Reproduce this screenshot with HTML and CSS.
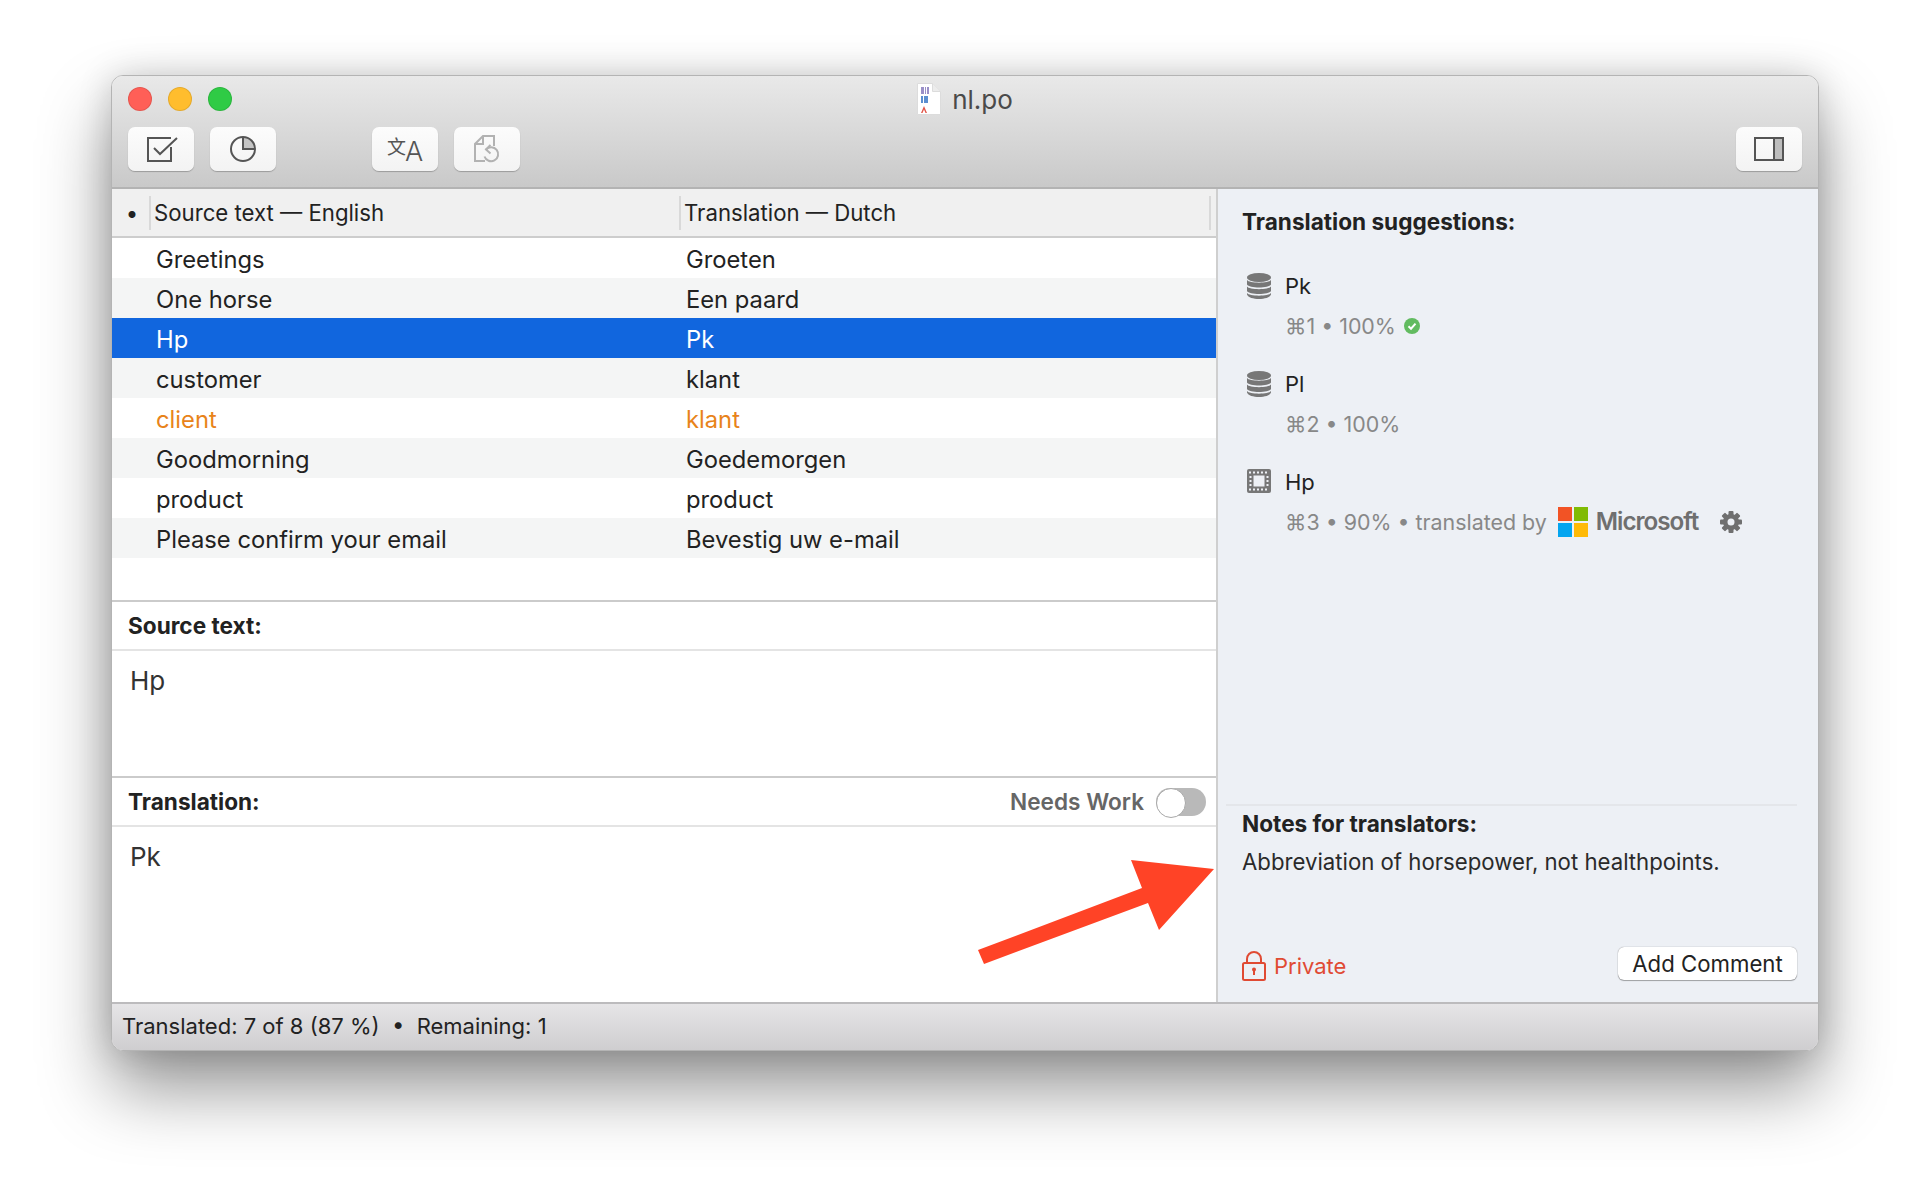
FILE: index.html
```html
<!DOCTYPE html>
<html lang="en">
<head>
  <meta charset="UTF-8">
  <meta name="viewport" content="width=device-width, initial-scale=1.0">
  <title>nl.po</title>
  <link rel="stylesheet" href="styles.css">
</head>
<body>
  <div class="window">
    <header class="titlebar">
      <div class="title-row">
        <div class="lights">
          <span class="light red"></span>
          <span class="light yellow"></span>
          <span class="light green"></span>
        </div>
        <div class="title">
          <svg class="file-icon" width="24" height="32" viewBox="0 0 24 32">
            <path d="M.5.500h15l8 8v23H.5z" fill="#fff" stroke="#dcdcdc"/>
            <path d="M15.500.5v8h8" fill="#ececec" stroke="#dcdcdc"/>
            <path d="M4 4h3v7H4zm4 0h1v7H8zm2 0h2v7h-2z" fill="#9a90c8"/>
            <path d="M4 13h2v7H4zm3 0h4v7H7z" fill="#5b8fd0"/>
            <path d="M4 30l3-7 3 7H8.500L7 26.500 5.500 30z" fill="#e2574a"/>
          </svg>
          <span>nl.po</span>
        </div>
        <div></div>
      </div>
      <div class="toolbar">
        <button class="tool">
          <svg class="check-icon" width="32" height="28" viewBox="0 0 32 28" fill="none" stroke="#555" stroke-width="2">
            <path d="M25 12v14H2V3h23"/>
            <path d="M8 13l6 6L31 3" />
          </svg>
        </button>
        <button class="tool">
          <svg width="30" height="30" viewBox="0 0 30 30" fill="none">
            <path d="M15 3a12 12 0 0 1 12 12H15z" fill="#c4c4c4"/>
            <circle cx="15" cy="15" r="12" stroke="#555" stroke-width="2"/>
            <path d="M15 3v12h12" stroke="#555" stroke-width="2"/>
          </svg>
        </button>
        <button class="tool tool-gap">
          <span class="glyph-cjk">文</span>
          <span class="glyph-latin">A</span>
        </button>
        <button class="tool">
          <svg width="30" height="30" viewBox="0 0 30 30" fill="none" stroke="#b2b2b2" stroke-width="2">
            <path d="M13 27H3V10l8-8h11v10"/>
            <path d="M11 2v8H3"/>
            <path d="M14 15.500a7 7 0 1 1-1.500 7"/>
            <path d="M18.500 11l-4.500 4.500 4.500 4"/>
          </svg>
        </button>
        <button class="tool tool-right">
          <svg width="32" height="26" viewBox="0 0 32 26" fill="none">
            <rect x="21" y="2" width="9" height="22" fill="#bdbdbd"/>
            <rect x="2" y="2" width="28" height="22" stroke="#555" stroke-width="2"/>
            <path d="M21 2v22" stroke="#555" stroke-width="2"/>
          </svg>
        </button>
      </div>
    </header>

    <main class="content">
      <section class="editor">
        <div class="table-head">
          <span class="head-dot">•</span>
          <span class="head-cell">Source text — English</span>
          <span class="head-cell">Translation — Dutch</span>
        </div>
        <div class="rows">
          <div class="row"><span>Greetings</span><span>Groeten</span></div>
          <div class="row"><span>One horse</span><span>Een paard</span></div>
          <div class="row selected"><span>Hp</span><span>Pk</span></div>
          <div class="row"><span>customer</span><span>klant</span></div>
          <div class="row warn"><span>client</span><span>klant</span></div>
          <div class="row"><span>Goodmorning</span><span>Goedemorgen</span></div>
          <div class="row"><span>product</span><span>product</span></div>
          <div class="row"><span>Please confirm your email</span><span>Bevestig uw e-mail</span></div>
        </div>

        <div class="field-head">
          <strong>Source text:</strong>
        </div>
        <div class="field-body source-body">Hp</div>

        <div class="field-head">
          <strong>Translation:</strong>
          <span class="needs-work">Needs Work</span>
          <span class="toggle"></span>
        </div>
        <div class="field-body translation-body">Pk</div>
      </section>

      <aside class="sidebar">
        <h3>Translation suggestions:</h3>

        <div class="suggestion">
          <svg class="sug-icon" width="24" height="26" viewBox="0 0 24 26"><use href="#db"/></svg>
          <div>
            <div class="sug-text">Pk</div>
            <div class="sug-meta">
              <span>⌘1 • 100%</span>
              <svg class="ok" width="16" height="16" viewBox="0 0 16 16">
                <circle cx="8" cy="8" r="8" fill="#62bb60"/>
                <path d="M4.500 8.300l2.500 2.400 4.500-5" fill="none" stroke="#fff" stroke-width="2"/>
              </svg>
            </div>
          </div>
        </div>

        <div class="suggestion">
          <svg class="sug-icon" width="24" height="26" viewBox="0 0 24 26"><use href="#db"/></svg>
          <div>
            <div class="sug-text">Pl</div>
            <div class="sug-meta"><span>⌘2 • 100%</span></div>
          </div>
        </div>

        <div class="suggestion">
          <svg class="sug-icon" width="24" height="26" viewBox="0 0 24 26">
            <rect y="0" width="24" height="24" rx="2" fill="#777"/>
            <rect x="6.500" y="6.500" width="11" height="11" fill="#edf0f5"/>
            <path d="M2 3.500h20M2 20.500h20" stroke="#edf0f5" stroke-width="2" stroke-dasharray="2 2" fill="none"/>
            <path d="M3.500 7v10M20.500 7v10" stroke="#edf0f5" stroke-width="2" stroke-dasharray="2 2" fill="none"/>
          </svg>
          <div>
            <div class="sug-text">Hp</div>
            <div class="sug-meta">
              <span>⌘3 • 90% • translated by</span>
              <svg class="ms-logo" width="30" height="30" viewBox="0 0 30 30">
                <rect width="14" height="14" fill="#f25325"/>
                <rect x="16" width="14" height="14" fill="#80bb03"/>
                <rect y="16" width="14" height="14" fill="#04a5f0"/>
                <rect x="16" y="16" width="14" height="14" fill="#ffba07"/>
              </svg>
              <span class="ms-name">Microsoft</span>
              <svg class="gear" width="22" height="22" viewBox="0 0 22 22">
                <g fill="#6f6f6f">
                  <rect x="8.500" y="0" width="5" height="22" rx="1"/>
                  <rect x="8.500" y="0" width="5" height="22" rx="1" transform="rotate(45 11 11)"/>
                  <rect x="8.500" y="0" width="5" height="22" rx="1" transform="rotate(90 11 11)"/>
                  <rect x="8.500" y="0" width="5" height="22" rx="1" transform="rotate(135 11 11)"/>
                  <circle cx="11" cy="11" r="8"/>
                </g>
                <circle cx="11" cy="11" r="3.500" fill="#edf0f5"/>
              </svg>
            </div>
          </div>
        </div>

        <div class="notes">
          <h3>Notes for translators:</h3>
          <p>Abbreviation of horsepower, not healthpoints.</p>
        </div>

        <div class="sidebar-foot">
          <span class="private">
            <svg width="24" height="30" viewBox="0 0 24 30" fill="none" stroke="#e04a33" stroke-width="2">
              <path d="M5 12V8a7 7 0 0 1 14 0v4"/>
              <rect x="1" y="12" width="22" height="17" rx="1.500"/>
              <path d="M12 19v5" />
              <circle cx="12" cy="18.500" r="1" fill="#e04a33"/>
            </svg>
            Private
          </span>
          <button class="add-comment">Add Comment</button>
        </div>
      </aside>
    </main>

    <footer class="statusbar">Translated: 7 of 8 (87 %)&nbsp; •&nbsp; Remaining: 1</footer>

    <svg class="arrow" width="250" height="120" viewBox="0 0 250 120">
      <path d="M8 94L172 32 161 4 244 13 189 74 178 47 14 108z" fill="#ff4326"/>
    </svg>
  </div>

  <svg width="0" height="0" class="defs">
    <symbol id="db" viewBox="0 0 24 26">
      <g fill="#777">
        <ellipse cx="12" cy="4.500" rx="12" ry="4.500"/>
        <path d="M0 7c2 3.500 22 3.500 24 0v4.500c-2 4-22 4-24 0z"/>
        <path d="M0 13.500c2 3.500 22 3.500 24 0V18c-2 4-22 4-24 0z"/>
        <path d="M0 20c2 3.500 22 3.500 24 0v1.500c-2 6-22 6-24 0z"/>
      </g>
    </symbol>
  </svg>
</body>
</html>
```

FILE: styles.css
```css
* {
  box-sizing: border-box;
  margin: 0;
  padding: 0;
}

body {
  font-family: Inter, 'Noto Sans', 'DejaVu Sans', sans-serif;
  background-color: #fff;
  color: #222;
  padding: 75px 0 0 111px;
  height: 1198px;
  overflow: hidden;
}

.defs {
  display: block;
}

.window {
  position: relative;
  width: 1708px;
  height: 976px;
  display: flex;
  flex-direction: column;
  border: 1px solid #b4b4b4;
  border-radius: 12px;
  overflow: hidden;
  background-color: #fff;
  box-shadow: 0 38px 70px rgba(0, 0, 0, 0.42), 0 0 34px rgba(0, 0, 0, 0.16);
}

.titlebar {
  height: 113px;
  flex: none;
  background: linear-gradient(#e9e9e9, #c9c9c9);
  border-bottom: 2px solid #b3b3b3;
  padding: 7px 16px 0;
}

.title-row {
  display: grid;
  grid-template-columns: 1fr auto 1fr;
  align-items: center;
  height: 30px;
}

.lights {
  display: flex;
  gap: 16px;
}

.light {
  width: 24px;
  height: 24px;
  border-radius: 50%;
  border: 1px solid rgba(0, 0, 0, 0.1);
}

.red { background-color: #ff5f57; }
.yellow { background-color: #ffbd2e; }
.green { background-color: #2fcb45; }

.title {
  display: flex;
  align-items: center;
  gap: 11px;
  font-size: 26px;
  color: #4a4a4a;
}

.toolbar {
  display: flex;
  gap: 16px;
  margin-top: 14px;
}

.tool {
  width: 66px;
  height: 44px;
  display: flex;
  align-items: center;
  justify-content: center;
  background: linear-gradient(#fcfcfc, #f3f3f3);
  border: none;
  border-radius: 7px;
  box-shadow: 0 1px 1px rgba(0, 0, 0, 0.25);
}

.tool-gap {
  margin-left: 80px;
}

.tool-right {
  margin-left: auto;
}

.check-icon {
  margin-left: 2px;
}

.glyph-cjk {
  font-family: 'Noto Sans CJK SC', sans-serif;
  font-size: 19px;
  font-weight: 400;
  line-height: 19px;
  color: #555;
  align-self: flex-start;
  margin-top: 9px;
}

.glyph-latin {
  font-family: Inter, sans-serif;
  font-size: 27px;
  font-weight: 300;
  line-height: 20px;
  color: #555;
  align-self: flex-end;
  margin-bottom: 9px;
  margin-left: -1px;
}

.content {
  flex: 1;
  display: flex;
  min-height: 0;
}

.editor {
  width: 1106px;
  flex: none;
  display: flex;
  flex-direction: column;
  border-right: 2px solid #cfcfcf;
}

.table-head {
  height: 49px;
  flex: none;
  display: grid;
  grid-template-columns: 34px 530px 532px;
  align-items: center;
  background-color: #f0f0f0;
  border-bottom: 2px solid #cdcdcd;
  font-size: 22.2px;
  color: #222;
  padding-left: 3px;
}

.head-dot {
  text-align: center;
}

.head-cell {
  border-left: 2px solid #d9d9d9;
  padding-left: 3px;
  line-height: 34px;
}

.head-cell:last-child {
  border-right: 2px solid #d9d9d9;
}

.rows {
  height: 364px;
  flex: none;
  border-bottom: 2px solid #cbcbcb;
}

.row {
  height: 40px;
  display: grid;
  grid-template-columns: 530px 1fr;
  align-items: center;
  padding: 2px 0 0 44px;
  font-size: 23.75px;
}

.row:nth-child(even) {
  background-color: #f4f5f5;
}

.row.selected {
  background-color: #1166de;
  color: #fff;
}

.row.warn {
  color: #e8831a;
}

.field-head {
  height: 49px;
  flex: none;
  display: flex;
  align-items: center;
  padding: 0 10px 0 16px;
  border-bottom: 2px solid #e4e4e4;
  font-size: 22.6px;
}

.field-head strong {
  margin-right: auto;
  font-weight: 700;
}

.needs-work {
  font-weight: 600;
  color: #666;
  margin-right: 12px;
}

.toggle {
  width: 50px;
  height: 28px;
  border-radius: 14px;
  background-color: #b9b9b9;
  position: relative;
}

.toggle::before {
  content: '';
  position: absolute;
  left: 0;
  top: 0;
  width: 28px;
  height: 28px;
  border-radius: 50%;
  background-color: #fff;
  border: 1px solid #a8a8a8;
}

.field-body {
  flex: none;
  padding: 13.5px 18px;
  font-size: 26px;
  color: #333;
}

.source-body {
  height: 127px;
  border-bottom: 2px solid #cbcbcb;
}

.translation-body {
  flex: 1;
  padding-top: 14px;
}

.sidebar {
  flex: 1;
  display: flex;
  flex-direction: column;
  background-color: #edf0f5;
  padding: 19px 21px 20px 24px;
}

.sidebar h3 {
  font-size: 22.6px;
  font-weight: 700;
  line-height: 28px;
  color: #222;
}

.suggestion {
  display: flex;
  gap: 14px;
  height: 98px;
}

.suggestion:first-of-type {
  margin-top: 35px;
}

.sug-icon {
  flex: none;
  margin: 2px 0 0 5px;
}

.sug-text {
  font-size: 22px;
  line-height: 30px;
}

.sug-meta {
  display: flex;
  align-items: center;
  gap: 6px;
  height: 30px;
  font-size: 21.4px;
  line-height: 30px;
  margin-top: 10px;
  color: #888;
  white-space: nowrap;
}

.ok {
  margin-left: 2px;
}

.ms-logo {
  margin-left: 5px;
}

.ms-name {
  font-size: 24.2px;
  font-weight: 600;
  letter-spacing: -1px;
  color: #6f6f6f;
  margin-left: 2px;
}

.gear {
  margin-left: 16px;
}

.notes {
  margin-top: auto;
  border-top: 2px solid #e4e6ea;
  margin-left: -16px;
  padding: 4px 0 0 16px;
  height: 146px;
}

.notes p {
  font-size: 22.2px;
  line-height: 30px;
  margin-top: 9px;
  color: #2a2a2a;
}

.sidebar-foot {
  display: flex;
  align-items: center;
  justify-content: space-between;
  height: 32px;
}

.private {
  display: flex;
  align-items: center;
  gap: 8px;
  font-size: 22px;
  color: #e04a33;
}

.add-comment {
  width: 179px;
  height: 33px;
  margin-bottom: 5px;
  font-family: inherit;
  font-size: 22.2px;
  color: #222;
  background-color: #fff;
  border: none;
  border-radius: 6px;
  box-shadow: 0 0 1px rgba(0, 0, 0, 0.5), 0 1px 1px rgba(0, 0, 0, 0.3);
}

.statusbar {
  height: 48px;
  flex: none;
  display: flex;
  align-items: center;
  padding: 0 0 2px 10px;
  font-size: 22px;
  white-space: pre;
  background: linear-gradient(#e6e5e7, #cfced0);
  border-top: 2px solid #bcbbbd;
}

/* annotation drawn on top of the screenshot */
.arrow {
  position: absolute;
  left: 858px;
  top: 780px;
}
```
